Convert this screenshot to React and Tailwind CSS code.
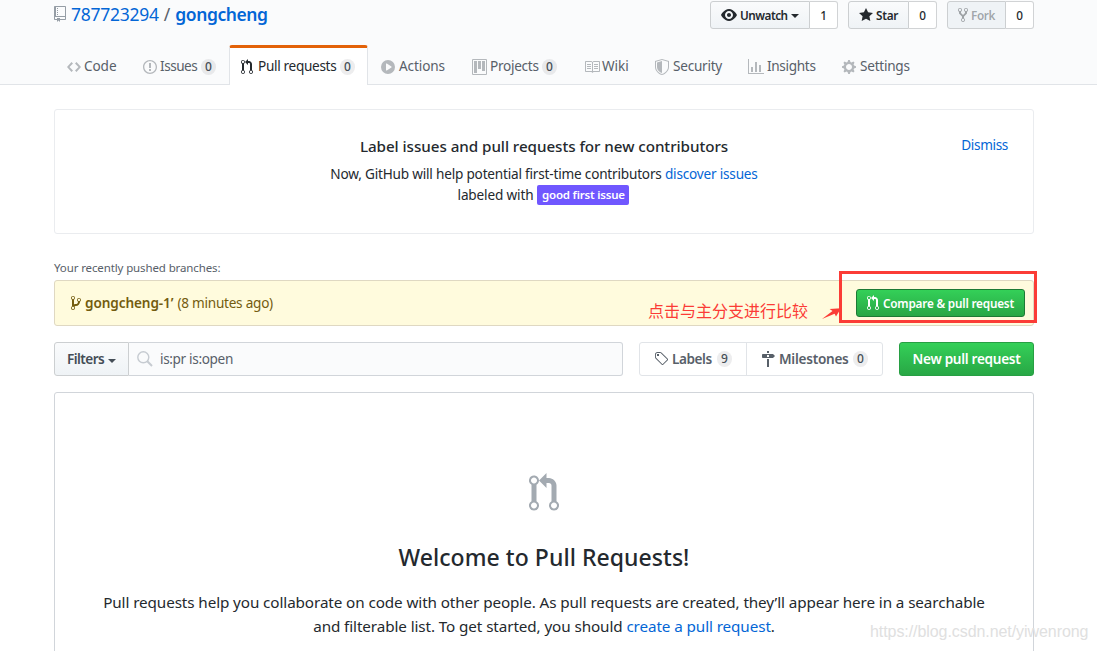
import React from "react";

const ICONS = {
  repo: [12, "M4 9H3V8h1v1zm0-3H3v1h1V6zm0-2H3v1h1V4zm0-2H3v1h1V2zm8-1v12c0 .55-.45 1-1 1H6v2l-1.5-1.5L3 16v-2H1c-.55 0-1-.45-1-1V1c0-.55.45-1 1-1h10c.55 0 1 .45 1 1zm-1 10H1v2h2v-1h3v1h5v-2zm0-10H2v9h9V1z"],
  code: [14, "M9.5 3L8 4.5 11.5 8 8 11.5 9.5 13 14 8 9.5 3zm-5 0L0 8l4.5 5L6 11.5 2.5 8 6 4.5 4.5 3z"],
  issue: [14, "M7 2.3c3.14 0 5.7 2.56 5.7 5.7s-2.56 5.7-5.7 5.7A5.71 5.71 0 0 1 1.3 8c0-3.14 2.56-5.7 5.7-5.7zM7 1C3.14 1 0 4.14 0 8s3.14 7 7 7 7-3.14 7-7-3.14-7-7-7zm1 3H6v5h2V4zm0 6H6v2h2v-2z"],
  pr: [12, "M11 11.28V5c-.03-.78-.34-1.47-.94-2.06C9.46 2.35 8.78 2.03 8 2H7V0L4 3l3 3V4h1c.27.02.48.11.69.31.21.2.3.42.31.69v6.28A1.993 1.993 0 0 0 10 15a1.993 1.993 0 0 0 1-3.72zm-1 2.92c-.66 0-1.2-.55-1.2-1.2 0-.65.55-1.2 1.2-1.2.65 0 1.2.55 1.2 1.2 0 .65-.55 1.2-1.2 1.2zM4 3c0-1.11-.89-2-2-2a1.993 1.993 0 0 0-1 3.72v6.56A1.993 1.993 0 0 0 2 15a1.993 1.993 0 0 0 1-3.72V4.72c.59-.34 1-.98 1-1.72zm-.8 10c0 .66-.55 1.2-1.2 1.2-.65 0-1.2-.55-1.2-1.2 0-.65.55-1.2 1.2-1.2.65 0 1.2.55 1.2 1.2zM2 4.2C1.34 4.2.8 3.65.8 3c0-.65.55-1.2 1.2-1.2.65 0 1.2.55 1.2 1.2 0 .65-.55 1.2-1.2 1.2z"],
  play: [14, "M14 8A7 7 0 1 1 0 8a7 7 0 0 1 14 0zm-8.223 3.482l4.599-3.066a.5.5 0 0 0 0-.832L5.777 4.518A.5.5 0 0 0 5 4.934v6.132a.5.5 0 0 0 .777.416z"],
  project: [15, "M10 12h3V2h-3v10zm-4-2h3V2H6v8zm-4 4h3V2H2v12zm-1 1h13V1H1v14zM14 0H1a1 1 0 0 0-1 1v14a1 1 0 0 0 1 1h13a1 1 0 0 0 1-1V1a1 1 0 0 0-1-1z"],
  book: [16, "M3 5h4v1H3V5zm0 3h4V7H3v1zm0 2h4V9H3v1zm11-5h-4v1h4V5zm0 2h-4v1h4V7zm0 2h-4v1h4V9zm2-6v9c0 .55-.45 1-1 1H9.5l-1 1-1-1H2c-.55 0-1-.45-1-1V3c0-.55.45-1 1-1h5.5l1 1 1-1H15c.55 0 1 .45 1 1zm-8 .5L7.5 3H2v9h6V3.5zm7-.5H9.5l-.5.5V12h6V3z"],
  shield: [14, "M0 2l7-2 7 2v6.02C14 12.69 8.69 16 7 16c-1.69 0-7-3.31-7-7.98V2zm1 .75L7 1l6 1.75v5.268C13 12.104 8.449 15 7 15c-1.449 0-6-2.896-6-6.982V2.75zm1 .75L7 2v12c-1.207 0-5-2.482-5-5.985V3.5z"],
  graph: [16, "M16 14v1H0V0h1v14h15zM5 13H3V8h2v5zm4 0H7V3h2v10zm4 0h-2V6h2v7z"],
  gear: [14, "M14 8.77v-1.6l-1.94-.64-.45-1.09.88-1.84-1.13-1.13-1.81.91-1.09-.45-.69-1.92h-1.6l-.63 1.94-1.11.45-1.84-.88-1.13 1.13.91 1.81-.45 1.09L0 7.23v1.59l1.94.64.45 1.09-.88 1.84 1.13 1.13 1.81-.91 1.09.45.69 1.92h1.59l.63-1.94 1.11-.45 1.84.88 1.13-1.13-.92-1.81.47-1.09L14 8.75v.02zM7 11c-1.66 0-3-1.34-3-3s1.34-3 3-3 3 1.34 3 3-1.34 3-3 3z"],
  eye: [16, "M8.06 2C3 2 0 8 0 8s3 6 8.06 6C13 14 16 8 16 8s-3-6-7.94-6zM8 12c-2.2 0-4-1.78-4-4 0-2.2 1.8-4 4-4 2.22 0 4 1.8 4 4 0 2.22-1.78 4-4 4zm2-4c0 1.11-.89 2-2 2-1.11 0-2-.89-2-2 0-1.11.89-2 2-2 1.11 0 2 .89 2 2z"],
  star: [14, "M14 6l-4.9-.64L7 1 4.9 5.36 0 6l3.6 3.26L2.67 14 7 11.67 11.33 14l-.93-4.74L14 6z"],
  fork: [10, "M8 1a1.993 1.993 0 0 0-1 3.72V6L5 8 3 6V4.72A1.993 1.993 0 0 0 2 1a1.993 1.993 0 0 0-1 3.72V6.5l3 3v1.78A1.993 1.993 0 0 0 5 15a1.993 1.993 0 0 0 1-3.72V9.5l3-3V4.72A1.993 1.993 0 0 0 8 1zM2 4.2C1.34 4.2.8 3.65.8 3c0-.65.55-1.2 1.2-1.2.65 0 1.2.55 1.2 1.2 0 .65-.55 1.2-1.2 1.2zm3 10c-.66 0-1.2-.55-1.2-1.2 0-.65.55-1.2 1.2-1.2.65 0 1.2.55 1.2 1.2 0 .65-.55 1.2-1.2 1.2zm3-10c-.66 0-1.2-.55-1.2-1.2 0-.65.55-1.2 1.2-1.2.65 0 1.2.55 1.2 1.2 0 .65-.55 1.2-1.2 1.2z"],
  branch: [10, "M10 5c0-1.11-.89-2-2-2a1.993 1.993 0 0 0-1 3.72v.3c-.02.52-.23.98-.63 1.38-.4.4-.86.61-1.38.63-.83.02-1.48.16-2 .45V4.72a1.993 1.993 0 0 0-1-3.72C.88 1 0 1.89 0 3a2 2 0 0 0 1 1.72v6.56c-.59.35-1 .99-1 1.72 0 1.11.89 2 2 2 1.11 0 2-.89 2-2 0-.53-.2-1-.53-1.36.09-.06.48-.41.59-.47.25-.11.56-.17.94-.17 1.05-.05 1.95-.45 2.75-1.25S8.95 7.77 9 6.73h-.02C9.59 6.37 10 5.73 10 5zM2 1.8c.66 0 1.2.55 1.2 1.2 0 .65-.55 1.2-1.2 1.2C1.35 4.2.8 3.65.8 3c0-.65.55-1.2 1.2-1.2zm0 12.41c-.66 0-1.2-.55-1.2-1.2 0-.65.55-1.2 1.2-1.2.65 0 1.2.55 1.2 1.2 0 .65-.55 1.2-1.2 1.2zm6-8c-.66 0-1.2-.55-1.2-1.2 0-.65.55-1.2 1.2-1.2.65 0 1.2.55 1.2 1.2 0 .65-.55 1.2-1.2 1.2z"],
  tag: [14, "M7.73 1.73C7.26 1.26 6.62 1 5.96 1H3.5C2.13 1 1 2.13 1 3.5v2.47c0 .66.27 1.3.73 1.77l6.06 6.06c.39.39 1.02.39 1.41 0l4.59-4.59a.996.996 0 0 0 0-1.41L7.73 1.73zM2.38 7.09c-.31-.3-.47-.7-.47-1.13V3.5c0-.88.72-1.59 1.59-1.59h2.47c.42 0 .83.16 1.13.47l6.14 6.13-4.73 4.73-6.13-6.15zM3.01 3h2v2H3V3h.01z"],
  milestone: [14, "M8 2H6V0h2v2zm4 5H2c-.55 0-1-.45-1-1V4c0-.55.45-1 1-1h10l2 2-2 2zM8 4H6v2h2V4zM6 16h2V8H6v8z"],
};

function Icon({ name, size = 16, className = "" }) {
  const [w, d] = ICONS[name];
  return (
    <svg
      viewBox={`0 0 ${w} 16`}
      width={(w * size) / 16}
      height={size}
      fill="currentColor"
      fillRule="evenodd"
      className={`shrink-0 ${className}`}
    >
      <path d={d} />
    </svg>
  );
}

const Caret = ({ className = "" }) => (
  <span className={`size-0 border-x-4 border-t-4 border-x-transparent border-t-current ${className}`} />
);

const Counter = ({ children, className = "" }) => (
  <span className={`flex h-4 w-[15px] items-center justify-center rounded-full bg-[#1b1f23]/8 text-xs font-medium text-[#444d56] ${className}`}>
    {children}
  </span>
);

const TABS = [
  { icon: "code", label: "Code", box: "w-[76px]", text: "w-[37px] ml-[3px] tracking-[-0.1px]" },
  { icon: "issue", label: "Issues", count: 0, box: "w-[99px]", text: "w-[41px] ml-[3px] tracking-[-0.48px]" },
  { icon: "pr", label: "Pull requests", count: 0, active: true, box: "w-[139px]", text: "w-[82px] ml-[5px] tracking-[-0.32px]" },
  { icon: "play", label: "Actions", box: "w-[91px]", text: "ml-1 tracking-[-0.12px]" },
  { icon: "project", label: "Projects", count: 0, box: "w-[112px]", text: "w-[52px] ml-[3px] tracking-[-0.27px]" },
  { icon: "book", label: "Wiki", box: "w-[71px]", text: "ml-[2px] tracking-[-0.05px]" },
  { icon: "shield", label: "Security", box: "w-[93px]", text: "ml-1 tracking-[-0.25px]" },
  { icon: "graph", label: "Insights", box: "w-[94px]", text: "ml-[3px] tracking-[-0.33px]" },
  { icon: "gear", label: "Settings", box: "w-[93px]", text: "ml-1 tracking-[-0.25px]" },
];

function Tab({ tab }) {
  const state = tab.active
    ? "rounded-t-[3px] border-x border-t-[3px] border-x-[#e1e4e8] border-t-[#e36209] bg-white pl-[11px] text-[#24292e]"
    : "border-t-[3px] border-transparent pl-[13px] text-[#586069]";
  return (
    <a className={`flex h-10 items-center pt-px ${tab.box} ${state}`}>
      <Icon name={tab.icon} className={tab.active ? "" : "text-[#b4b8bc]"} />
      <span className={`pb-px ${tab.text}`}>{tab.label}</span>
      {tab.count !== undefined && <Counter>{tab.count}</Counter>}
    </a>
  );
}

function SocialButton({ icon, label, count, caret, disabled, box, text }) {
  return (
    <div className="flex h-[28px] text-[11.75px] font-semibold text-[#24292e]">
      <button
        className={`flex items-center rounded-l-[3px] border border-[#cccfd1] pl-[10px] ${box} ${
          disabled ? "bg-[#eff3f6] text-[#24292e]/40" : "bg-linear-to-b from-[#fafbfc] to-[#eff3f6]"
        }`}
      >
        <Icon name={icon} />
        <span className={`ml-[3px] pt-0.5 ${text}`}>{label}</span>
        {caret && <Caret className="mt-0.5 ml-[3px]" />}
      </button>
      <span className="flex w-[28px] items-center justify-center rounded-r-[3px] border border-l-0 border-[#d1d3d5] bg-white pt-0.5 font-medium">
        {count}
      </span>
    </div>
  );
}

export default function App() {
  return (
    <div className="relative h-[651px] w-[1097px] overflow-hidden bg-white font-['Noto_Sans','Noto_Sans_CJK_SC',sans-serif] text-[13.6px] whitespace-nowrap text-[#24292e]">
      <header className="flex h-[85px] flex-col justify-between border-b border-[#e1e4e8] bg-[#fafbfc] pr-[63px] pl-[54px]">
        <div className="flex justify-between pt-px">
          <h1 className="flex h-7 items-center text-[17.5px] text-[#0366d6]">
            <Icon name="repo" className="-mt-0.5 mr-[5px] text-[#959da5]" />
            <a className="pb-px tracking-[-0.25px]">787723294</a>
            <span className="mx-[5px] pb-px text-[#586069]">/</span>
            <a className="pb-px font-semibold tracking-[-0.45px]">gongcheng</a>
          </h1>
          <div className="flex gap-[10px]">
            <SocialButton icon="eye" label="Unwatch" count="1" caret box="w-[100px]" text="tracking-[-0.5px]" />
            <SocialButton icon="star" label="Star" count="0" box="w-[61px]" text="tracking-[-0.3px]" />
            <SocialButton icon="fork" label="Fork" count="0" disabled box="w-[59px]" text="tracking-[-0.35px]" />
          </div>
        </div>
        <nav className="-mb-px flex">
          {TABS.map((t) => (
            <Tab key={t.label} tab={t} />
          ))}
        </nav>
      </header>

      <main className="mr-[63px] ml-[54px]">
        <section className="relative mt-6 flex h-[125px] flex-col items-center rounded-[3px] border border-[#eaecef] pt-6">
          <h2 className="text-[15.2px] leading-6 font-medium tracking-[-0.05px]">Label issues and pull requests for new contributors</h2>
          <p className="mt-[5px] leading-[21px] tracking-[-0.2px]">
            Now, GitHub will help potential first-time contributors <a className="text-[#0366d6]">discover issues</a>
          </p>
          <p className="flex items-center leading-[21px]">
            <span className="tracking-[-0.15px]">labeled with</span>
            <span className="mr-px ml-1 flex h-5 w-[92px] items-center justify-center rounded-[2px] bg-[#7057ff] text-[11.5px] font-semibold tracking-[-0.2px] text-white">
              good first issue
            </span>
          </p>
          <a className="absolute top-[24px] right-[25px] leading-[21px] tracking-[-0.35px] text-[#0366d6]">Dismiss</a>
        </section>

        <p className="mt-[25px] text-[11.5px] leading-[18px] tracking-[-0.12px] text-[#586069]">Your recently pushed branches:</p>
        <section className="relative mt-[3px] flex h-[46px] items-center rounded-[3px] border border-[#dfd8c2] bg-[#fffbdd] pl-4 text-[#735c0f]">
          <Icon name="branch" />
          <span className="ml-1 pt-px font-semibold tracking-[-0.1px]">gongcheng-1’</span>
          <span className="ml-1 pt-px tracking-[-0.25px]">(8 minutes ago)</span>
          <span className="absolute top-[18px] left-[593px] text-base leading-6 text-[#fb3c36]">点击与主分支进行比较</span>
          <svg className="absolute top-[25px] left-[767px] text-[#fb3c36]" width="21" height="14" fill="currentColor">
            <path d="M0 13 10.5 5 7.6 3 19 2.2 14 10.6 12.6 7.8Z" />
          </svg>
          <button className="absolute top-[8px] left-[801px] flex h-[28px] w-[169px] items-center rounded-[3px] border border-[#1d7a35] bg-linear-to-b from-[#34d058] to-[#28a745] pl-[10px] text-[11.75px] font-semibold text-white">
            <Icon name="pr" />
            <span className="ml-1 pt-px tracking-[-0.2px]">Compare &amp; pull request</span>
          </button>
          <span className="absolute top-[-10px] left-[784px] h-[52px] w-[198px] border-3 border-[#fb3c36]" />
        </section>

        <div className="mt-4 flex h-[34px]">
          <button className="flex w-[75px] items-center rounded-l-[3px] border border-[#cccfd1] bg-linear-to-b from-[#fafbfc] to-[#eff3f6] pl-[12px] font-semibold text-[#444d56]">
            <span className="pt-px tracking-[-0.55px]">Filters</span>
            <Caret className="mt-1 ml-1" />
          </button>
          <div className="flex w-[494px] items-center rounded-r-[3px] border border-l-0 border-[#d1d5da] bg-[#fafbfc] pl-2 text-[#586069]">
            <svg width="16" height="16" viewBox="0 0 16 16" fill="none" stroke="#c6cbd1" strokeWidth="1.4">
              <circle cx="6.3" cy="6.3" r="5.5" />
              <path d="M10.3 10.3 15 15" strokeWidth="2" />
            </svg>
            <span className="ml-[7px] pt-px tracking-[-0.35px]">is:pr is:open</span>
          </div>
          <div className="ml-4 flex w-[244px] rounded-[3px] border border-[#e1e4e8] font-semibold text-[#586069]">
            <a className="flex w-[107px] items-center border-r border-[#e1e4e8] pl-[14px]">
              <Icon name="tag" />
              <span className="ml-1 w-[45px] pt-px tracking-[-0.45px]">Labels</span>
              <Counter>9</Counter>
            </a>
            <a className="flex items-center pl-[14px]">
              <Icon name="milestone" />
              <span className="ml-1 w-[74px] pt-px tracking-[-0.27px]">Milestones</span>
              <Counter>0</Counter>
            </a>
          </div>
          <button className="ml-4 w-[135px] rounded-[3px] border border-[#279f43] bg-linear-to-b from-[#34d058] to-[#28a745] pt-px font-semibold tracking-[-0.3px] text-white">
            New pull request
          </button>
        </div>

        <section className="mt-4 flex h-[300px] flex-col items-center rounded-[3px] border border-[#d1d5da] pt-20">
          <Icon name="pr" size={40} className="text-[#a3aab1]" />
          <h3 className="mt-[26px] text-[23px] leading-9 font-medium tracking-[0.05px]">Welcome to Pull Requests!</h3>
          <p className="mt-[15px] text-[15.25px] leading-6 tracking-[-0.1px]">
            Pull requests help you collaborate on code with other people. As pull requests are created, they’ll appear here in a searchable
          </p>
          <p className="text-[15.25px] leading-6 tracking-[-0.1px]">
            and filterable list. To get started, you should <a className="text-[#0366d6]">create a pull request</a>.
          </p>
        </section>
      </main>

      <span className="absolute top-[622px] left-[870px] font-['Liberation_Sans',sans-serif] text-base leading-5 tracking-[-0.07px] text-[#e0e0e0]">
        https://blog.csdn.net/yiwenrong
      </span>
    </div>
  );
}
